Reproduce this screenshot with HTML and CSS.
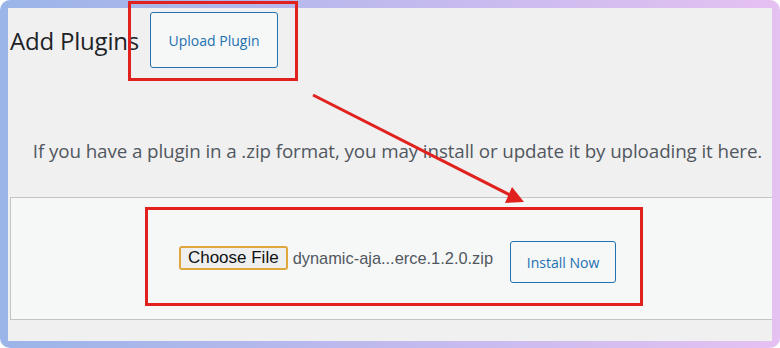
FILE: index.html
```html
<!DOCTYPE html>
<html lang="en">

<head>
    <meta charset="UTF-8">
    <meta name="viewport" content="width=device-width, initial-scale=1.0">
    <title>Add Plugins</title>
    <link rel="stylesheet" href="styles.css">
</head>

<body>
    <div class="frame">
        <div class="wrap">
            <div class="page-head">
                <h1>Add Plugins</h1>
                <a href="#" class="page-title-action">Upload Plugin</a>
            </div>

            <div class="upload-plugin">
                <p class="install-help">If you have a plugin in a .zip format, you may install or update it by uploading it here.</p>
                <form class="upload-form">
                    <span class="file-btn">Choose File</span>
                    <span class="file-name">dynamic-aja...erce.1.2.0.zip</span>
                    <button type="button" class="button">Install Now</button>
                </form>
            </div>
        </div>

        <!-- annotation marks drawn over the screenshot -->
        <svg class="notes" width="780" height="348" viewBox="0 0 780 348">
            <rect x="129.5" y="2.5" width="167" height="77" fill="none" stroke="#e0211d" stroke-width="3"/>
            <rect x="146.5" y="208.5" width="495" height="96" fill="none" stroke="#e0211d" stroke-width="3"/>
            <line x1="313" y1="95" x2="512" y2="196" stroke="#e0211d" stroke-width="3"/>
            <polygon points="524,202 505,203 512,187" fill="#e0211d"/>
        </svg>
    </div>
</body>

</html>
```

FILE: styles.css
```css
body {
    margin: 0;
    padding: 0;
    background: #fff;
    font-family: "Open Sans", Arial, sans-serif;
}

.frame {
    position: relative;
    width: 780px;
    height: 348px;
    box-sizing: border-box;
    padding: 8px 8px 7px 8px;
    border-radius: 10px;
    background: linear-gradient(90deg, #9bb5e9, #c4baee 55%, #e5c1f2);
}

.wrap {
    height: 100%;
    background: #f0f0f1;
    overflow: hidden;
    padding-left: 2px;
}

.page-head {
    display: flex;
    align-items: center;
    width: 775px;
    padding-top: 4px;
    height: 56px;
}

h1 {
    margin: 0 11px 0 0;
    font-size: 24px;
    font-weight: 400;
    color: #1d2327;
    letter-spacing: -0.2px;
}

.page-title-action {
    display: flex;
    align-items: center;
    justify-content: center;
    width: 128px;
    height: 56px;
    box-sizing: border-box;
    border: 1px solid #2271b1;
    border-radius: 3px;
    background: #f6f7f7;
    color: #2271b1;
    text-decoration: none;
    font-size: 14px;
}

.upload-plugin {
    width: 775px;
}

.install-help {
    margin: 0;
    padding: 69px 0 32px;
    text-align: center;
    font-size: 18.8px;
    line-height: 28px;
    color: #50575e;
    letter-spacing: -0.1px;
}

.upload-form {
    display: flex;
    justify-content: center;
    align-items: flex-start;
    height: 123px;
    box-sizing: border-box;
    padding-top: 43px;
    margin: 0;
    border: 1px solid #c3c4c7;
    background: #f6f7f7;
}

.file-btn {
    margin-top: 5px;
    height: 24px;
    box-sizing: border-box;
    padding: 0 7px;
    border: 2px solid #dfa73c;
    border-radius: 3px;
    background: #efefef;
    font-family: "Liberation Sans", Arial, sans-serif;
    font-size: 17px;
    line-height: 20px;
    color: #111;
}

.file-name {
    margin: 7px 17px 0 5px;
    font-family: "Liberation Sans", Arial, sans-serif;
    font-size: 16.4px;
    line-height: 20px;
    color: #50575e;
}

.button {
    width: 106px;
    height: 42px;
    border: 1px solid #2271b1;
    border-radius: 3px;
    background: #f6f7f7;
    color: #2271b1;
    font-family: "Open Sans", Arial, sans-serif;
    font-size: 14px;
    padding: 0;
    cursor: pointer;
}

.notes {
    position: absolute;
    top: 0;
    left: 0;
    pointer-events: none;
}
```
